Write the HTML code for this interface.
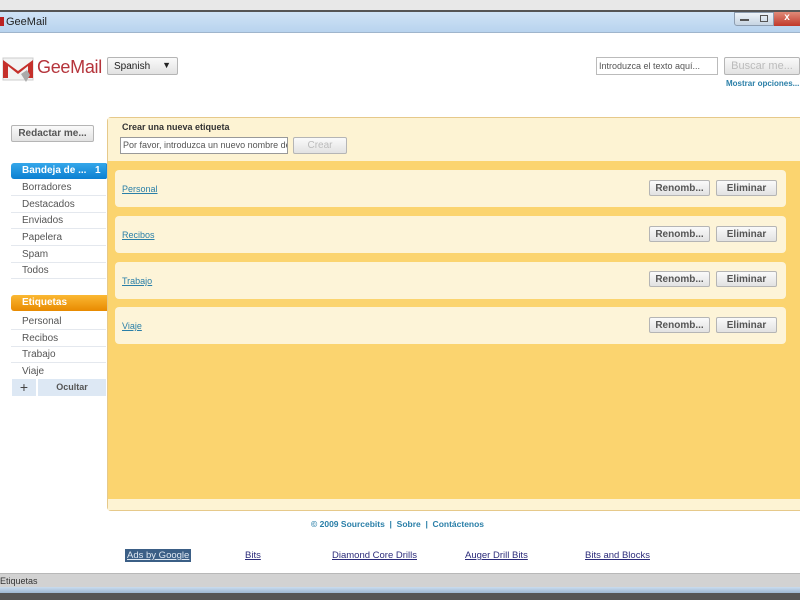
<!DOCTYPE html>
<html><head><meta charset="utf-8"><style>
*{box-sizing:border-box;margin:0;padding:0}
body{width:800px;height:600px;overflow:hidden;background:#fff;font-family:"Liberation Sans",sans-serif;font-size:10px;color:#333;position:relative}
.a{position:absolute}
.btn{position:absolute;background:linear-gradient(#fafafa,#e2e2e2);border:1px solid #b5b5b5;border-radius:2px;text-align:center;font-weight:bold;color:#555;font-size:10px}
.row{position:absolute;left:115px;width:671px;height:37px;background:#fdf4d8;border-radius:4px}
.row a{position:absolute;left:7px;top:14px;color:#2a7fa8;text-decoration:underline;font-size:9px}
.side{position:absolute;left:11px;width:95px;height:17px;border-bottom:1px solid #e4e8ee;padding:3px 0 0 11px;color:#555;font-size:10px}
</style></head><body>
<div class="a" style="left:0;top:0;width:800px;height:11px;background:#e8e8e8"></div>
<div class="a" style="left:0;top:10px;width:800px;height:2px;background:#555"></div>
<div class="a" style="left:0;top:12px;width:800px;height:21px;background:linear-gradient(#cfe3f6,#b8d3ee);border-bottom:1px solid #9fb5cc"></div>
<div class="a" style="left:6px;top:16px;font-size:11px;color:#222">GeeMail</div>
<div class="a" style="left:0;top:17px;width:4px;height:9px;background:#b22"></div>
<div class="a" style="left:734px;top:12px;width:40px;height:14px;background:linear-gradient(#eef3f8,#c6d4e2);border:1px solid #8d9db0;border-radius:0 0 0 3px"></div>
<div class="a" style="left:740px;top:19px;width:9px;height:2px;background:#555"></div>
<div class="a" style="left:760px;top:15px;width:8px;height:7px;border:1px solid #555"></div>
<div class="a" style="left:774px;top:12px;width:26px;height:14px;background:linear-gradient(#e08a78,#c0392b);color:#fff;font-size:10px;text-align:center;font-weight:bold">x</div>

<svg class="a" style="left:1px;top:52px" width="34" height="32" viewBox="0 0 34 32"><path d="M2 6 L32 6 L32 28 L2 28Z" fill="#f3f3f3" stroke="#ccc"/><path d="M2 8 L2 26 L7 26 L7 14 L17 22 L27 14 L27 26 L32 26 L32 8 L17 19Z" fill="#c5302b"/><path d="M20 22 l6 -4 l3 5 l-4 7z" fill="#aaa"/></svg>
<div class="a" style="left:37px;top:57px;font-size:18px;color:#b5343b;letter-spacing:-0.3px">GeeMail</div>
<div class="btn" style="left:107px;top:57px;width:71px;height:18px;font-weight:normal;text-align:left;padding:3px 0 0 6px;color:#222">Spanish<span style="position:absolute;right:6px;top:2px;font-size:9px">▼</span></div>

<div class="a" style="left:596px;top:57px;width:122px;height:18px;border:1px solid #bbb;font-size:9px;color:#555;padding:3px 0 0 2px">Introduzca el texto aquí...</div>
<div class="btn" style="left:724px;top:57px;width:76px;height:18px;color:#bbb;font-weight:normal;font-size:11px;padding-top:2px">Buscar me...</div>
<div class="a" style="left:726px;top:79px;color:#2a7fa8;font-weight:bold;font-size:8px">Mostrar opciones...</div>

<div class="btn" style="left:11px;top:125px;width:83px;height:17px;padding-top:2px">Redactar me...</div>
<div class="a" style="left:11px;top:163px;width:95px;height:16px;background:linear-gradient(#35a7ea,#0b7fd1);border-radius:3px 0 0 3px;color:#fff;font-weight:bold;padding:2px 0 0 11px">Bandeja de ...<span style="position:absolute;left:84px">1</span></div>
<div class="a" style="left:106px;top:163px;width:0;height:0;border-top:8px solid transparent;border-bottom:8px solid transparent;border-left:8px solid #1a8ddb"></div>
<div class="side" style="top:179px">Borradores</div>
<div class="side" style="top:196px">Destacados</div>
<div class="side" style="top:212px">Enviados</div>
<div class="side" style="top:229px">Papelera</div>
<div class="side" style="top:246px">Spam</div>
<div class="side" style="top:262px">Todos</div>
<div class="a" style="left:11px;top:295px;width:96px;height:16px;background:linear-gradient(#fbb833,#e88a00);border-radius:3px 0 0 3px;color:#fff;font-weight:bold;padding:2px 0 0 11px">Etiquetas</div>
<div class="side" style="top:313px">Personal</div>
<div class="side" style="top:330px">Recibos</div>
<div class="side" style="top:346px">Trabajo</div>
<div class="side" style="top:363px;border:none">Viaje</div>
<div class="a" style="left:12px;top:379px;width:24px;height:17px;background:#dde8f4;text-align:center;font-size:14px;line-height:16px;color:#444">+</div>
<div class="a" style="left:38px;top:379px;width:68px;height:17px;background:#dde8f4;text-align:center;font-weight:bold;color:#555;font-size:9px;padding-top:3px">Ocultar</div>

<div class="a" style="left:107px;top:117px;width:700px;height:394px;background:#fbd46f;border:1px solid #e6c98a;border-radius:4px"></div>
<div class="a" style="left:108px;top:118px;width:692px;height:43px;background:#fdf3d3"></div>
<div class="a" style="left:108px;top:499px;width:692px;height:11px;background:#fdf3d3"></div>
<div class="a" style="left:122px;top:122px;font-weight:bold;color:#333;font-size:9px">Crear una nueva etiqueta</div>
<div class="a" style="left:120px;top:137px;width:168px;height:17px;background:#fff;border:1px solid #999;font-size:9px;color:#555;padding:2px 0 0 2px;white-space:nowrap;overflow:hidden">Por favor, introduzca un nuevo nombre de e</div>
<div class="btn" style="left:293px;top:137px;width:54px;height:17px;color:#bbb;font-weight:normal;padding-top:2px">Crear</div>

<div class="row" style="top:170px"><a>Personal</a></div>
<div class="row" style="top:216px"><a>Recibos</a></div>
<div class="row" style="top:262px"><a>Trabajo</a></div>
<div class="row" style="top:307px"><a>Viaje</a></div>
<div class="btn" style="left:649px;top:180px;width:61px;height:16px;padding-top:2px">Renomb...</div><div class="btn" style="left:716px;top:180px;width:61px;height:16px;padding-top:2px">Eliminar</div>
<div class="btn" style="left:649px;top:226px;width:61px;height:16px;padding-top:2px">Renomb...</div><div class="btn" style="left:716px;top:226px;width:61px;height:16px;padding-top:2px">Eliminar</div>
<div class="btn" style="left:649px;top:271px;width:61px;height:16px;padding-top:2px">Renomb...</div><div class="btn" style="left:716px;top:271px;width:61px;height:16px;padding-top:2px">Eliminar</div>
<div class="btn" style="left:649px;top:317px;width:61px;height:16px;padding-top:2px">Renomb...</div><div class="btn" style="left:716px;top:317px;width:61px;height:16px;padding-top:2px">Eliminar</div>

<div class="a" style="left:311px;top:519px;color:#2a7fa8;font-weight:bold;font-size:8.5px">© 2009 Sourcebits &nbsp;|&nbsp; Sobre &nbsp;|&nbsp; Contáctenos</div>
<div class="a" style="left:125px;top:549px;background:#3b5f86;color:#dfe8f2;padding:1px 2px;font-size:9.5px;text-decoration:underline">Ads by Google</div>
<div class="a" style="left:245px;top:550px;color:#2b2b7a;text-decoration:underline;font-size:9.5px">Bits</div>
<div class="a" style="left:332px;top:550px;color:#2b2b7a;text-decoration:underline;font-size:9.5px">Diamond Core Drills</div>
<div class="a" style="left:465px;top:550px;color:#2b2b7a;text-decoration:underline;font-size:9.5px">Auger Drill Bits</div>
<div class="a" style="left:585px;top:550px;color:#2b2b7a;text-decoration:underline;font-size:9.5px">Bits and Blocks</div>

<div class="a" style="left:0;top:573px;width:800px;height:14px;background:#d2d2d2;border-top:1px solid #b8b8b8;font-size:9px;color:#333;padding-top:2px">Etiquetas</div>
<div class="a" style="left:0;top:587px;width:800px;height:6px;background:linear-gradient(#c9dcef,#9db7d2)"></div>
<div class="a" style="left:0;top:593px;width:800px;height:7px;background:#555"></div>
</body></html>
